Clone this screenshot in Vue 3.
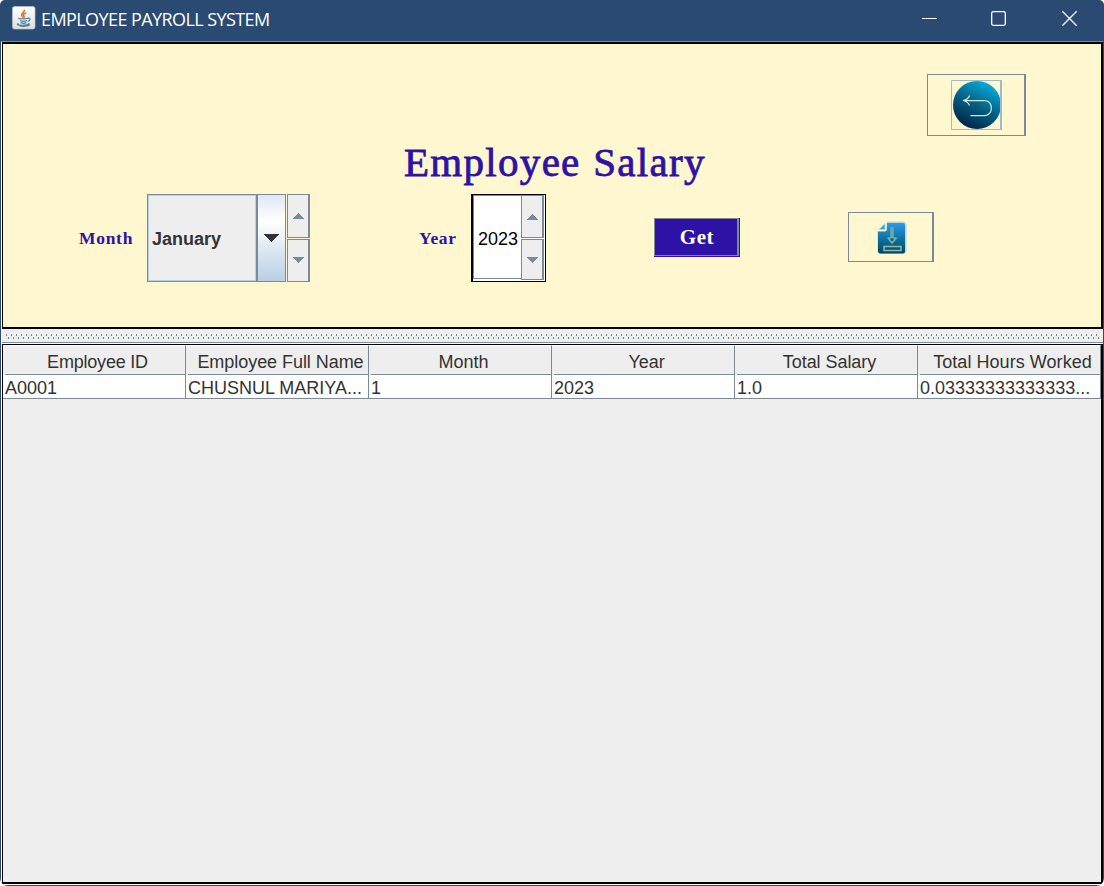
<script setup>
const columns = ['Employee ID', 'Employee Full Name', 'Month', 'Year', 'Total Salary', 'Total Hours Worked']
const rows = [['A0001', 'CHUSNUL MARIYA...', '1', '2023', '1.0', '0.03333333333333...']]
</script>

<template>
  <div class="window">
    <header class="titlebar">
      <svg class="java" width="24" height="24" viewBox="0 0 24 24">
        <defs>
          <linearGradient id="tile" x1="0" y1="0" x2="0" y2="1">
            <stop offset="0" stop-color="#fff" /><stop offset="1" stop-color="#dcdee0" />
          </linearGradient>
        </defs>
        <rect x=".5" y=".5" width="22.5" height="22.5" rx="2" fill="url(#tile)" stroke="#b9c1ca" stroke-width=".7" />
        <path d="M12.2 3.8c1.3 2.2-3.1 3.3-2.5 5.3.2.9 1.3 1.6 1.3 2.7M14.3 6.7c-3 1.1-3.7 2.1-2.5 3.4.5.6.2 1.3-.3 1.8" fill="none" stroke="#e8792c" stroke-width="1.7" />
        <path d="M7.2 12.2c-2 .6 7.7.9 8.8-.1M8 14.5c1.6.8 5.3.8 7.2 0M8.6 16.6c1.5.7 4.2.7 5.8 0M15.5 12.3c3.5-1 3 2.4.3 3M6.5 17.7c-4.7 1.3 7.3 3 11-.2M7.5 20c4 .6 8.3.2 10.7-1.2" fill="none" stroke="#53819f" stroke-width="1.25" />
      </svg>
      <span class="caption">EMPLOYEE PAYROLL SYSTEM</span>
      <svg class="sysbtns" width="158" height="18" viewBox="0 0 158 18">
        <path d="M0 9.500h15" stroke="#fff" stroke-width="1" />
        <rect x="69.700" y="2.700" width="13.600" height="13.600" rx="1.500" fill="none" stroke="#fff" stroke-width="1.300" />
        <path d="M140.300 2.300l14.400 14.400M154.700 2.300l-14.400 14.400" stroke="#fff" stroke-width="1.300" />
      </svg>
    </header>

    <main class="content">
      <section class="form">
        <button class="back" aria-label="Back">
          <svg width="51" height="50" viewBox="0 0 51 50">
            <defs>
              <linearGradient id="disc" x1=".75" y1=".08" x2=".3" y2=".95">
                <stop offset="0" stop-color="#04a9d6" /><stop offset=".5" stop-color="#036084" /><stop offset="1" stop-color="#02274b" />
              </linearGradient>
            </defs>
            <circle cx="26" cy="25" r="24" fill="url(#disc)" />
            <path d="M12 20.500H34c8.500 0 8.500 15 0 15H19.500M18.500 15.500c-1 3-3 4.300-6.500 5 3.500.7 5.500 2 6.500 5" fill="none" stroke="#d9e5c6" stroke-width="1.250" />
            <path d="M.5 49.500V.5H50M0 49.500H50" fill="none" stroke="#a3b8cc" />
            <path d="M50 0V50" stroke="#a3b8cc" stroke-width="2" />
          </svg>
        </button>
        <h1>Employee Salary</h1>
        <div class="controls">
          <label class="lbl month">Month</label>
          <div class="combo">
            <div class="value">January</div>
            <div class="drop">
              <svg width="16" height="8" viewBox="0 0 16 8" shape-rendering="crispEdges"><path d="M0 0h16L8 8z" fill="#333" /></svg>
            </div>
          </div>
          <div class="steps">
            <div class="step"><svg width="12" height="6" viewBox="0 0 12 6" shape-rendering="crispEdges"><path d="M0 6h12L6 0z" fill="#7a8a99" /></svg></div>
            <div class="step"><svg width="12" height="6" viewBox="0 0 12 6" shape-rendering="crispEdges"><path d="M0 0h12L6 6z" fill="#7a8a99" /></svg></div>
          </div>
          <label class="lbl year">Year</label>
          <div class="spinner">
            <div class="num">2023</div>
            <div class="steps inner">
              <div class="step"><svg width="12" height="6" viewBox="0 0 12 6" shape-rendering="crispEdges"><path d="M0 6h12L6 0z" fill="#7a8a99" /></svg></div>
              <div class="step"><svg width="12" height="6" viewBox="0 0 12 6" shape-rendering="crispEdges"><path d="M0 0h12L6 6z" fill="#7a8a99" /></svg></div>
            </div>
          </div>
          <button class="get"><span>Get</span></button>
          <button class="save" aria-label="Save">
            <svg width="30" height="34" viewBox="0 0 30 34">
              <defs>
                <linearGradient id="doc" x1="0" y1="0" x2="0" y2="1">
                  <stop offset="0" stop-color="#2b9bf0" /><stop offset=".4" stop-color="#147bb0" /><stop offset="1" stop-color="#00465c" />
                </linearGradient>
              </defs>
              <path d="M10 .5H27l2.500 2.500V30.500l-2 2.500H3L.5 30.500V10.500H9z" fill="#b9d8cf" />
              <path d="M10 2H26q2 0 2 2V30q0 2.500-2.500 2.500H3.500Q1 32.500 1 30V10.500H7.500Q10 10.500 10 8z" fill="url(#doc)" />
              <path d="M2 8.500L8 2.500V8.500z" fill="#3c9ade" stroke="#b9d8cf" stroke-width=".8" />
              <path d="M13 6h4v10.500h4L15 23.500 9.500 16.500H13z" fill="#5b9dab" />
              <path d="M15 6v11M11 17h8l-4 5z" fill="none" stroke="#80b5b4" stroke-width="1" />
              <circle cx="15" cy="18.500" r="1.500" fill="#08648a" />
              <rect x="7" y="25.500" width="17" height="4" fill="none" stroke="#8eb3a7" stroke-width="1.600" />
            </svg>
          </button>
        </div>
      </section>

      <svg class="divider" width="1101" height="15" shape-rendering="crispEdges">
        <defs>
          <pattern id="bumps" width="5" height="6" patternUnits="userSpaceOnUse" x="3" y="4">
            <path d="M0 0h2v2h-2zM3 3h1v1h-1z" fill="#fff" />
            <path d="M1 1h1v2h-1zM3 4h1v2h-1z" fill="#74818e" />
          </pattern>
        </defs>
        <rect width="1101" height="15" fill="#eee" />
        <rect x="3" y="4" width="1096" height="6" fill="url(#bumps)" />
        <rect y="13" width="1101" height="1" fill="#7a8a99" />
        <rect y="14" width="1101" height="1" fill="#fff" />
      </svg>

      <section class="tablepane">
        <div class="row head">
          <div v-for="c in columns" :key="c" class="th"><span>{{ c }}</span></div>
        </div>
        <div v-for="r in rows" :key="r[0]" class="row">
          <div v-for="(v, i) in r" :key="i" class="td">{{ v }}</div>
        </div>
      </section>
    </main>
  </div>
</template>

<style>
body { margin: 0; background: #fff; overflow: hidden; }
</style>

<style scoped>
* { box-sizing: border-box; }
button { padding: 0; margin: 0; background: none; border-radius: 0; display: flex; align-items: center; justify-content: center; }
.window { width: 1104px; height: 886px; background: #2b4a72; border-radius: 5px 5px 8px 8px; overflow: hidden; font-family: "Liberation Sans", Arial, sans-serif; color: #333; }
.titlebar { height: 41px; display: flex; padding: 6px 24px 0 12px; color: #fff; }
.java { flex: none; }
.caption { margin-left: 5px; height: 26px; font: 18px/27px "Open Sans", "Noto Sans", sans-serif; letter-spacing: -0.58px; white-space: nowrap; }
.sysbtns { margin: 3px 0 0 auto; flex: none; }
.content { height: 844px; margin: 0 1px; padding-left: 1px; border-top: 1px solid #7a8a99; background: #fff; display: flex; flex-direction: column; }
.form { width: 1101px; height: 287px; flex: none; background: #fff7cf; border: 2px solid #000; border-left-width: 1px; padding-top: 30px; display: flex; flex-direction: column; }
.back { width: 99px; height: 62px; margin-left: auto; margin-right: 75px; border: 1px solid #7a8a99; border-right-width: 2px; }
h1 { margin: 4px 0 0 401px; height: 54px; font: 400 41px/44px "Liberation Serif", serif; -webkit-text-stroke: 0.8px #2d12a5; color: #2d12a5; letter-spacing: 1.3px; word-spacing: 1px; white-space: nowrap; }
.controls { height: 88px; display: flex; align-items: center; }
.lbl { font: bold 17.5px/20px "Liberation Serif", serif; color: #2d12a5; white-space: nowrap; }
.month { margin-left: 76px; width: 68px; letter-spacing: .7px; }
.year { margin-left: 109px; width: 52px; letter-spacing: .7px; }
.combo { width: 139px; height: 88px; display: flex; border: 1px solid #7a8a99; border-right: 0; background: #eee; }
.value { width: 108px; border: 1px solid #b8cfe5; padding: 0 0 0 3px; font-weight: bold; font-size: 18px; line-height: 86px; }
.drop { width: 30px; padding-right: 1px; border-left: 2px solid #7a8a99; border-right: 1px solid #7a8a99; background: linear-gradient(#dde8f3, #fff 30%, #b8cfe5); display: flex; align-items: center; justify-content: center; }
.steps { width: 23px; height: 88px; margin-left: 1px; display: flex; flex-direction: column; gap: 1px; }
.step { flex: 1; background: #eee; border: 1px solid #7a8a99; border-right-width: 2px; display: flex; align-items: center; justify-content: center; }
.spinner { width: 75px; height: 88px; border: 1px solid #000; border-left-width: 2px; background: #fff; display: flex; }
.num { width: 48px; height: 84px; border: 1px solid #7a8a99; border-right: 0; font-size: 18px; line-height: 86px; padding-left: 4px; color: #000; }
.inner { height: 85px; margin: 0; width: 23px; }
.inner .step { flex: 0 0 41px; }
.inner .step:first-child { flex-basis: 43px; }
.get { width: 86px; height: 39px; margin: -1px 0 0 108px; background: #2d12a5; border: 1px solid #2d12a5; border-width: 0 1px 1px 0; }
.get span { width: 85px; height: 38px; border: 1px solid #7a8a99; border-right-width: 2px; font: bold 21px/37px "Liberation Serif", serif; letter-spacing: .6px; padding-left: 2px; color: #fff; }
.save { width: 86px; height: 50px; margin: -2px 0 0 108px; padding: 1px 0 0 2px; border: 1px solid #7a8a99; border-right-width: 2px; }
.divider { display: block; flex: none; }
.tablepane { width: 1101px; height: 540px; flex: none; background: #eee; border: 1px solid #000; border-width: 1px 2px 2px 1px; }
.row { display: grid; grid-template-columns: repeat(6, 183px); height: 24px; background: #fff; }
.head { height: 30px; background: #eee; }
.th { border-right: 1px solid #7a8a99; border-top: 1px solid #fff; padding-left: 2px; display: flex; }
.th span { flex: 1; border-bottom: 1px solid #7a8a99; text-align: center; padding-left: 5px; font-size: 18px; letter-spacing: -.05px; line-height: 32px; height: 29px; white-space: nowrap; }
.th:first-child span { letter-spacing: -.2px; }
.th:last-child span { letter-spacing: .05px; }
.td { height: 24px; border-right: 1px solid #7a8a99; border-bottom: 1px solid #7a8a99; padding-left: 2px; font-size: 18px; line-height: 26px; white-space: nowrap; }
</style>
